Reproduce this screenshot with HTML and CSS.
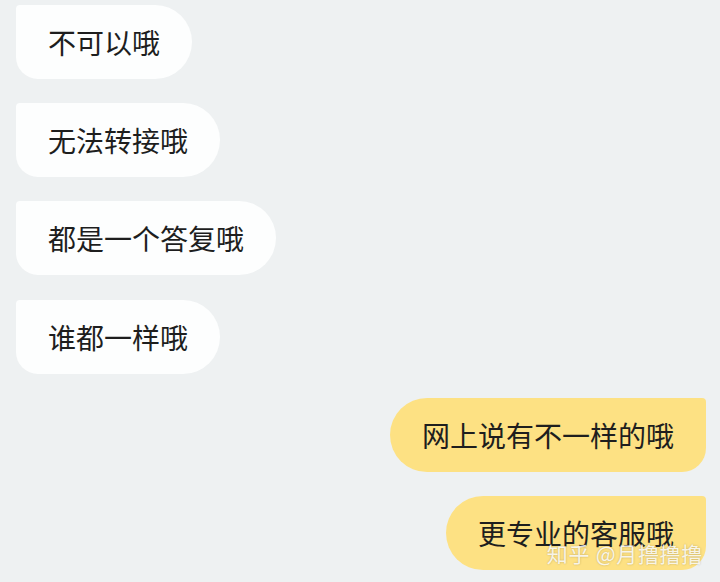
FILE: index.html
```html
<!DOCTYPE html>
<html lang="zh-CN">
<head>
    <meta charset="UTF-8">
    <title>聊天记录</title>
    <link rel="stylesheet" href="styles.css">
</head>
<body>
    <div class="chat">
        <div class="msg msg-left">不可以哦</div>
        <div class="msg msg-left">无法转接哦</div>
        <div class="msg msg-left">都是一个答复哦</div>
        <div class="msg msg-left">谁都一样哦</div>
        <div class="msg msg-right">网上说有不一样的哦</div>
        <div class="msg msg-right">更专业的客服哦</div>
    </div>
    <div class="watermark">知乎 @月撸撸撸</div>
</body>
</html>
```

FILE: styles.css
```css
body {
    margin: 0;
    padding: 0;
    background: #eef1f2;
    font-family: "Noto Sans CJK SC", "Noto Sans", sans-serif;
    height: 582px;
    overflow: hidden;
    position: relative;
}
.chat {
    display: flex;
    flex-direction: column;
    gap: 24.2px;
    padding: 5px 14px 0 16px;
}
.msg {
    height: 74px;
    line-height: 74px;
    padding: 0 32px;
    font-size: 28px;
    color: #1e1e1e;
    white-space: nowrap;
}
.msg-left {
    align-self: flex-start;
    background: #fdfefe;
    border-radius: 4px 37px 37px 22px;
}
.msg-right {
    align-self: flex-end;
    background: #fde183;
    border-radius: 37px 4px 24px 37px;
}
.watermark {
    position: absolute;
    right: 17px;
    bottom: 15px;
    font-size: 21px;
    line-height: 28px;
    letter-spacing: 0.7px;
    color: rgba(255, 255, 255, 0.85);
    text-shadow: 0 0 2px rgba(0, 0, 0, 0.25);
}
```
